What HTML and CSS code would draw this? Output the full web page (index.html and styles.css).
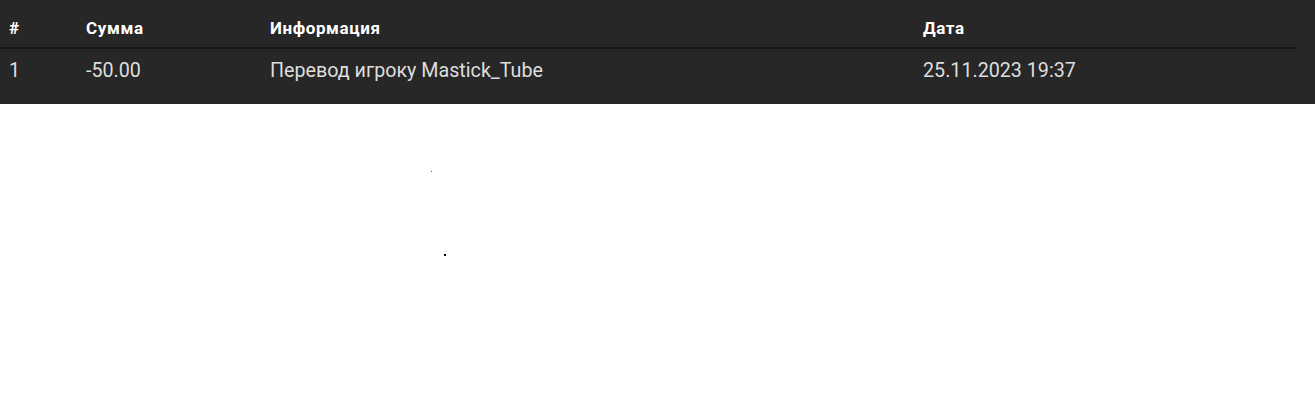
FILE: index.html
```html
<!DOCTYPE html>
<html lang="ru">
<head>
<meta charset="utf-8">
<link rel="stylesheet" href="styles.css">
</head>
<body>
<div class="panel">
  <table class="log">
    <thead>
      <tr>
        <th class="c-num">#</th>
        <th class="c-sum">Сумма</th>
        <th class="c-info">Информация</th>
        <th class="c-date">Дата</th>
      </tr>
    </thead>
    <tbody>
      <tr>
        <td>1</td>
        <td>-50.00</td>
        <td>Перевод игроку Mastick_Tube</td>
        <td>25.11.2023 19:37</td>
      </tr>
    </tbody>
  </table>
</div>
<span class="dot dot-a"></span>
<span class="dot dot-b"></span>
</body>
</html>
```
FILE: styles.css
```css
html, body {
  margin: 0;
  padding: 0;
  background: #ffffff;
}
body {
  font-family: Roboto, "Liberation Sans", sans-serif;
  position: relative;
  height: 416px;
}
.panel {
  background: #272727;
  height: 104px;
  padding-right: 19px;
  box-sizing: border-box;
}
.log {
  width: 100%;
  border-collapse: collapse;
  table-layout: fixed;
}
.log th, .log td {
  text-align: left;
  padding: 0 0 0 9px;
}
.log th {
  color: #ffffff;
  font-weight: 700;
  font-size: 17px;
  letter-spacing: 0.6px;
  height: 48px;
  padding-top: 9px;
  box-sizing: border-box;
  vertical-align: top;
  line-height: 38px;
  border-bottom: 2px solid #171717;
}
.log td {
  color: #dedede;
  font-size: 19.7px;
  font-weight: 400;
  height: 44px;
  line-height: 44px;
}
.c-num { width: 77px; }
.c-sum { width: 184px; }
.c-info { width: 653px; }
.dot {
  position: absolute;
  width: 1px;
  height: 1px;
  background: #000;
}
.dot-a { left: 431px; top: 171px; background: #555; }
.dot-b { left: 444px; top: 254px; width: 2px; height: 2px; }
```
